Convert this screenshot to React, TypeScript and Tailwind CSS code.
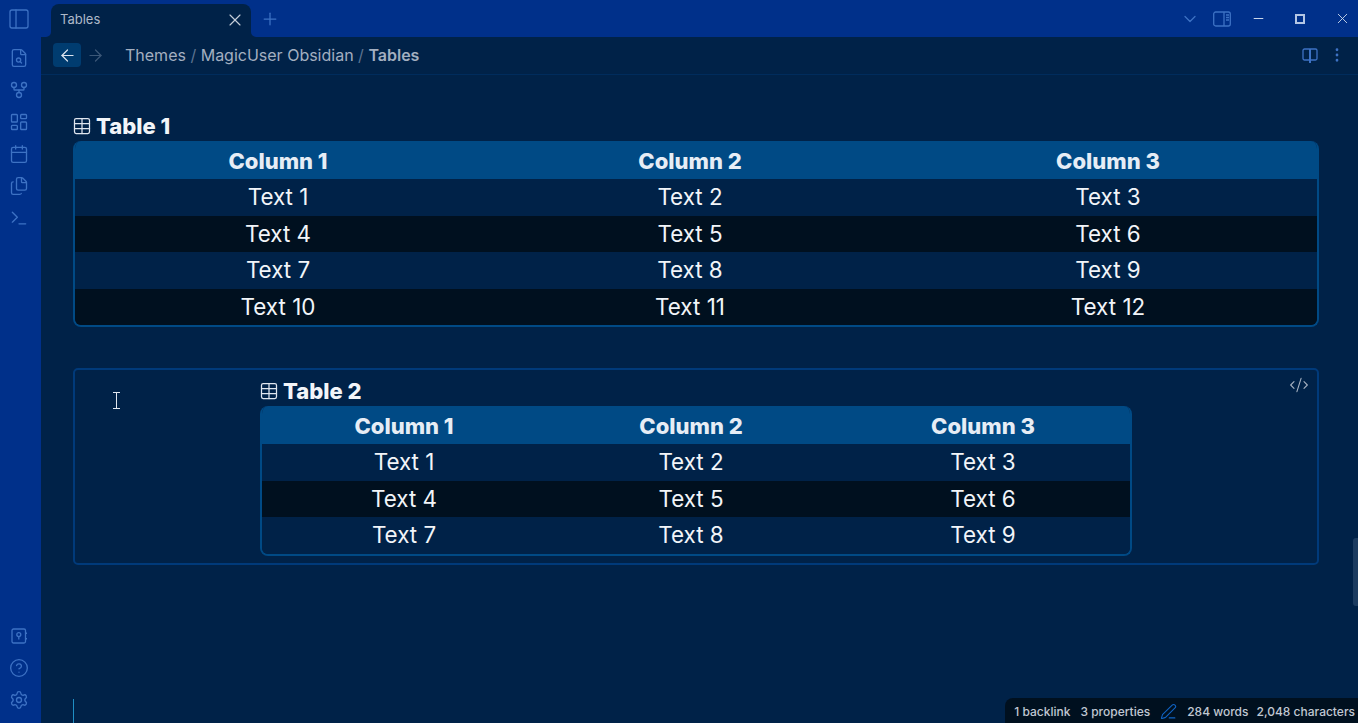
import React from "react";
import {
  PanelLeft, X, Plus, ChevronDown, Minus, FileSearch, GitFork, LayoutDashboard, Calendar, Files, Terminal,
  CircleHelp, Settings, ArrowLeft, ArrowRight, EllipsisVertical, Table, CodeXml, PenLine,
} from "lucide-react";

const font = { fontFamily: "Inter, 'Liberation Sans', sans-serif" };

function Rail({ icon: Icon }: { icon: React.ComponentType<any> }) {
  return (
    <div className="flex h-8 w-full items-center justify-center pr-[3px] text-[#3d72c4]">
      <Icon size={20} strokeWidth={1.6} />
    </div>
  );
}

function DataTable({ rows, cols }: { rows: string[][]; cols: string }) {
  return (
    <div className="w-full overflow-hidden rounded-[8px] border-2 border-t-0 border-[#004a85]">
      <div className={`grid ${cols} h-[38px] items-center bg-[#004a85] text-center text-[22px] leading-none font-extrabold text-[#e6edf5]`}>
        {["Column 1", "Column 2", "Column 3"].map((c) => (
          <div key={c} className="pt-[2px]">{c}</div>
        ))}
      </div>
      {rows.map((r, i) => (
        <div
          key={i}
          className={`grid ${cols} h-[36.5px] items-center text-center text-[22.4px] leading-none text-[#f2f5f9] ${i % 2 ? "bg-[#00101f]" : "bg-[#002248]"}`}
        >
          {r.map((c) => (
            <div key={c}>{c}</div>
          ))}
        </div>
      ))}
    </div>
  );
}

function Title({ text }: { text: string }) {
  return (
    <div className="flex h-[30px] items-center gap-[4px] text-[22px] leading-none font-extrabold text-[#f2f5f9]">
      <Table size={20} strokeWidth={1.5} className="-ml-[1px] text-[#dfe6ef]" />
      <span>{text}</span>
    </div>
  );
}

export default function App() {
  return (
    <div style={font} className="relative flex h-[723px] w-[1358px] flex-col overflow-hidden bg-[#002248]">
      <header className="flex h-[37px] shrink-0 items-end bg-[#00308a]">
        <div className="flex h-[37px] w-[38px] items-center justify-center text-[#3d72c4]">
          <PanelLeft size={24} strokeWidth={1.3} />
        </div>
        <div className="relative ml-[13px] flex h-[33px] w-[200px] items-center justify-between rounded-t-[8px] bg-[#002248] pr-[6px] pb-[2px] pl-[9px] text-[13px] text-[#aeb9c8]">
          <svg width="5" height="5" viewBox="0 0 5 5" className="absolute bottom-0 -left-[5px] fill-[#002248]">
            <path d="M5 0v5H0a5 5 0 0 0 5-5Z" />
          </svg>
          <span>Tables</span>
          <X size={20} strokeWidth={1.4} className="text-[#c3ccd8]" />
          <svg width="5" height="5" viewBox="0 0 5 5" className="absolute -right-[5px] bottom-0 fill-[#002248]">
            <path d="M0 0v5h5a5 5 0 0 1-5-5Z" />
          </svg>
        </div>
        <div className="ml-[9px] flex h-[37px] items-center text-[#3d72c4]">
          <Plus size={20} strokeWidth={1.5} />
        </div>
        <div className="ml-auto flex h-[37px] items-center text-[#3d72c4]">
          <ChevronDown size={20} strokeWidth={1.5} />
          <svg width="18" height="16" viewBox="0 0 18 16" fill="none" stroke="currentColor" strokeWidth="1.3" className="ml-[13px]">
            <rect x="0.7" y="1" width="16.6" height="14" rx="2" />
            <path d="M11 1v14M13 4h3M13 6.5h3M13 9h3" />
          </svg>
          <div className="ml-[6px] flex h-[37px] w-[42px] items-center justify-center text-[#c9d6ea]">
            <Minus size={15} strokeWidth={1.6} />
          </div>
          <div className="flex h-[37px] w-[42px] items-center justify-center">
            <div className="h-[10px] w-[10px] border-2 border-[#b4c6e4]" />
          </div>
          <div className="flex h-[37px] w-[37px] items-center justify-center pl-[5px] text-[#c9d6ea]">
            <X size={17} strokeWidth={1.3} />
          </div>
        </div>
      </header>

      <div className="flex min-h-0 flex-1">
        <aside className="flex w-[41px] shrink-0 flex-col bg-[#00308a] pt-[5px]">
          <Rail icon={FileSearch} />
          <Rail icon={GitFork} />
          <Rail icon={LayoutDashboard} />
          <Rail icon={Calendar} />
          <Rail icon={Files} />
          <Rail icon={Terminal} />
          <div className="flex-1" />
          <div className="flex h-8 items-center justify-center pr-[3px] text-[#3d72c4]">
            <svg width="16" height="16" viewBox="0 0 16 16" fill="none" stroke="currentColor" strokeWidth="1.3">
              <rect x="1" y="1" width="13.5" height="14" rx="1.5" />
              <circle cx="7.8" cy="6.6" r="2" />
              <path d="M7.8 8.6v3M15.4 4.5v1.5M15.4 10v1.5" />
            </svg>
          </div>
          <Rail icon={CircleHelp} />
          <Rail icon={Settings} />
          <div className="h-[7px]" />
        </aside>

        <main className="flex min-w-0 flex-1 flex-col">
          <nav className="flex h-[38px] shrink-0 items-center border-b border-[#002c5c] pr-[12px] pb-[1px] pl-[12px] text-[16px] text-[#a3afc0]">
            <div className="flex h-6 w-7 items-center justify-center rounded-[4px] bg-[#003c70] text-[#dbe4ef]">
              <ArrowLeft size={19} strokeWidth={1.5} />
            </div>
            <ArrowRight size={19} strokeWidth={1.5} className="ml-[4.5px] text-[#3c5878]" />
            <div className="ml-[20.5px] flex items-center">
              <span>Themes</span>
              <span className="mx-[4.5px] text-[#5d7390]">/</span>
              <span>MagicUser Obsidian</span>
              <span className="mx-[4.5px] text-[#5d7390]">/</span>
              <span className="font-semibold">Tables</span>
            </div>
            <svg width="16" height="15" viewBox="0 0 16 15" fill="none" stroke="#3d72c4" strokeWidth="1.3" className="ml-auto">
              <rect x="1" y="1" width="14" height="11" rx="1.5" />
              <path d="M8 1v14" strokeWidth="2" />
            </svg>
            <EllipsisVertical size={18} strokeWidth={1.7} className="ml-[10px] text-[#3d72c4]" />
          </nav>

          <div className="flex flex-col pt-[36px] pr-[39px] pl-[32px]">
            <Title text="Table 1" />
            <DataTable
              cols="grid-cols-[406px_418px_1fr]"
              rows={[
                ["Text 1", "Text 2", "Text 3"],
                ["Text 4", "Text 5", "Text 6"],
                ["Text 7", "Text 8", "Text 9"],
                ["Text 10", "Text 11", "Text 12"],
              ]}
            />
            <div className="relative mt-[41px] flex h-[197px] flex-col items-center rounded-[5px] border-2 border-[#003a7a] pt-[6px]">
              <CodeXml size={20} strokeWidth={1.3} className="absolute top-[5px] right-[8px] text-[#a7b3c2]" />
              <div className="w-[872px]">
                <Title text="Table 2" />
                <DataTable
                  cols="grid-cols-[284px_290px_1fr]"
                  rows={[
                    ["Text 1", "Text 2", "Text 3"],
                    ["Text 4", "Text 5", "Text 6"],
                    ["Text 7", "Text 8", "Text 9"],
                  ]}
                />
              </div>
            </div>
          </div>
          <div className="mt-auto ml-[32px] h-[24px] w-px bg-[#1f8fc4]" />
        </main>
      </div>

      <svg width="8" height="17" viewBox="0 0 8 17" fill="none" stroke="#dfe6ef" strokeWidth="1" className="absolute top-[392px] left-[112px]">
        <path d="M1 0.5h7M4.5 0.5v16M1 16.5h7" />
      </svg>
      <div className="absolute top-[538px] right-0 h-[68px] w-[5px] rounded-l-[3px] bg-[#1c3c60]" />
      <div className="absolute right-0 bottom-0 flex h-[25px] items-center gap-[10px] rounded-tl-[8px] bg-[#00101f] pt-[2px] pr-[3px] pl-[9px] text-[12px] font-medium text-[#c0c8d3]">
        <span>1 backlink</span>
        <span>3 properties</span>
        <PenLine size={17} strokeWidth={1.5} className="text-[#0f63c4]" />
        <span>284 words</span>
        <span className="-ml-[2px]">2,048 characters</span>
      </div>
    </div>
  );
}
